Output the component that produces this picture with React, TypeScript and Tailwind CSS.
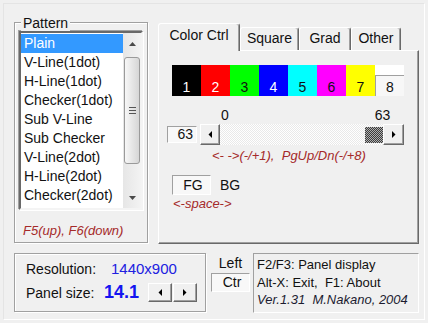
import React from "react";

const items = [
  "Plain",
  "V-Line(1dot)",
  "H-Line(1dot)",
  "Checker(1dot)",
  "Sub V-Line",
  "Sub Checker",
  "V-Line(2dot)",
  "H-Line(2dot)",
  "Checker(2dot)",
  "Checker(1x2)",
];

const swatches = [
  { bg: "bg-[#000000]", fg: "text-white", n: "1" },
  { bg: "bg-[#ff0000]", fg: "text-white", n: "2" },
  { bg: "bg-[#00ff00]", fg: "text-[#101010]", n: "3" },
  { bg: "bg-[#0000ff]", fg: "text-white", n: "4" },
  { bg: "bg-[#00ffff]", fg: "text-[#101010]", n: "5" },
  { bg: "bg-[#ff00ff]", fg: "text-[#101010]", n: "6" },
  { bg: "bg-[#ffff00]", fg: "text-[#101010]", n: "7" },
];

const raised =
  "flex items-center justify-center border border-t-white border-l-white border-r-[#696969] border-b-[#696969] shadow-[inset_-1px_-1px_0_#a0a0a0] bg-[#f0f0f0]";
const sunken = "border border-t-[#a0a0a0] border-l-[#a0a0a0] border-r-white border-b-white bg-[#f8f8f8]";
const etched = "border border-[#a0a0a0] shadow-[inset_1px_1px_0_#ffffff,1px_1px_0_#ffffff]";

function TriLeft() {
  return (
    <svg width="4" height="7" viewBox="0 0 4 7">
      <polygon points="4,0 4,7 0.5,3.5" fill="#000" />
    </svg>
  );
}
function TriRight() {
  return (
    <svg width="4" height="7" viewBox="0 0 4 7">
      <polygon points="0,0 0,7 3.5,3.5" fill="#000" />
    </svg>
  );
}

export default function App() {
  return (
    <div className="h-[323px] w-[428px] overflow-hidden bg-[#f0f0f0] p-[3px] text-[14px] text-[#111] [font-family:'Liberation_Sans',Arial,sans-serif]">
      <div className="h-[317px] w-[422px] border border-t-[#e4e4e4] border-l-[#e4e4e4] border-r-white border-b-white pl-[10px] pt-[10px]">
        {/* top row */}
        <div className="flex items-start">
          {/* Pattern group */}
          <div className={`relative mt-[8px] h-[221px] w-[134px] ${etched}`}>
            <div className="absolute left-[6px] top-[-8px] bg-[#f0f0f0] px-[2px] leading-[16px]">Pattern</div>
            <div className="ml-[4px] mt-[8px] flex h-[179px] w-[124px] border-2 border-t-[#696969] border-l-[#696969] border-r-[#f4f4f4] border-b-[#f4f4f4] bg-white shadow-[-1px_-1px_0_#a0a0a0,1px_1px_0_#ffffff]">
              <div className="h-full w-[102px] overflow-hidden pt-[1px]">
                {items.map((it, i) => (
                  <div
                    key={it}
                    className={
                      i === 0
                        ? "h-[19px] whitespace-nowrap bg-[#3399ff] pl-[3px] leading-[19px] text-white"
                        : "h-[19px] whitespace-nowrap pl-[3px] leading-[19px] text-[#111]"
                    }
                  >
                    {it}
                  </div>
                ))}
              </div>
              <div className="flex h-full w-[18px] flex-col bg-linear-to-r from-[#e6e6e6] to-[#f3f3f3]">
                <div className="flex h-[22px] items-center justify-center">
                  <svg width="7" height="4" viewBox="0 0 7 4">
                    <polygon points="0,4 7,4 3.5,0" fill="#4a4a4a" />
                  </svg>
                </div>
                <div className="mx-[1px] mt-[2px] flex h-[107px] items-center justify-center rounded-[3px] border border-[#9a9a9a] bg-linear-to-r from-[#f7f7f7] to-[#d6d6d6]">
                  <svg width="7" height="7" viewBox="0 0 7 7">
                    <rect x="0" y="0" width="7" height="1" fill="#555" />
                    <rect x="0" y="3" width="7" height="1" fill="#555" />
                    <rect x="0" y="6" width="7" height="1" fill="#555" />
                  </svg>
                </div>
                <div className="flex-1" />
                <div className="flex h-[20px] items-center justify-center">
                  <svg width="7" height="4" viewBox="0 0 7 4">
                    <polygon points="0,0 7,0 3.5,4" fill="#4a4a4a" />
                  </svg>
                </div>
              </div>
            </div>
            <div className="ml-[8px] mt-[13px] whitespace-nowrap text-[13px] italic leading-[15px] text-[#a52a2a]">
              F5(up), F6(down)
            </div>
          </div>

          {/* Tab control */}
          <div className="ml-[10px] mt-[9px] w-[261px]">
            <div className="flex h-[27px] items-end">
              <div className="relative z-10 -mb-px h-[28px] w-[82px] rounded-t-[3px] border border-b-0 border-t-white border-l-white border-r-[#696969] bg-[#f0f0f0] pt-[3px] text-center leading-[16px] shadow-[inset_-1px_0_0_#a0a0a0]">
                Color Ctrl
              </div>
              <div className="h-[23px] w-[59px] rounded-t-[3px] border border-b-0 border-t-white border-l-white border-r-[#696969] pt-[2px] text-center leading-[16px] shadow-[inset_-1px_0_0_#a0a0a0]">
                Square
              </div>
              <div className="h-[23px] w-[52px] rounded-t-[3px] border border-b-0 border-t-white border-l-white border-r-[#696969] pt-[2px] text-center leading-[16px] shadow-[inset_-1px_0_0_#a0a0a0]">
                Grad
              </div>
              <div className="h-[23px] w-[50px] rounded-t-[3px] border border-b-0 border-t-white border-l-white border-r-[#696969] pt-[2px] text-center leading-[16px] shadow-[inset_-1px_0_0_#a0a0a0]">
                Other
              </div>
            </div>
            <div className="h-[194px] w-[261px] border border-t-white border-l-white border-r-[#696969] border-b-[#696969] bg-[#f0f0f0] shadow-[inset_-1px_-1px_0_#a0a0a0]">
              {/* swatches */}
              <div className="ml-[13px] mt-[14px] flex h-[31px]">
                {swatches.map((s) => (
                  <div key={s.n} className={`flex h-[31px] w-[29px] items-end justify-center pb-[1px] leading-[16px] ${s.bg} ${s.fg}`}>
                    {s.n}
                  </div>
                ))}
                <div className="flex h-[31px] w-[29px] flex-col bg-white">
                  <div className="h-[10px]" />
                  <div className="flex flex-1 items-center justify-center border-l border-t border-[#a0a0a0] bg-[#f7f7f7] pt-[1px] leading-[16px] text-[#111]">
                    8
                  </div>
                </div>
              </div>
              {/* scale labels */}
              <div className="mt-[11px] flex h-[16px] leading-[16px]">
                <span className="ml-[62px]">0</span>
                <span className="ml-[146px]">63</span>
              </div>
              {/* slider */}
              <div className="mt-[1px] flex h-[21px] items-center">
                <div className={`ml-[8px] h-[17px] w-[30px] pr-[3px] text-right leading-[15px] ${sunken}`}>63</div>
                <div className="ml-[3px] flex h-[21px] w-[204px]">
                  <div className={`h-[21px] w-[20px] ${raised}`}>
                    <TriLeft />
                  </div>
                  <div className="flex flex-1 items-center justify-end bg-[repeating-conic-gradient(#ffffff_0%_25%,#e9e9e9_0%_50%)] bg-[length:2px_2px]">
                    <div className="h-[16px] w-[18px] bg-[repeating-conic-gradient(#3c3c3c_0%_25%,#b0b0b0_0%_50%)] bg-[length:2px_2px]" />
                  </div>
                  <div className={`h-[21px] w-[21px] ${raised}`}>
                    <TriRight />
                  </div>
                </div>
              </div>
              <div className="ml-[53px] mt-[3px] whitespace-pre text-[13px] italic leading-[15px] text-[#a52a2a]">
                {"<- ->(-/+1),  PgUp/Dn(-/+8)"}
              </div>
              {/* FG / BG */}
              <div className="mt-[12px] flex h-[20px] items-center">
                <div className={`ml-[13px] h-[20px] w-[39px] pl-[3px] text-center leading-[18px] ${sunken}`}>FG</div>
                <div className="ml-[9px] leading-[16px]">BG</div>
              </div>
              <div className="ml-[14px] mt-[1px] whitespace-pre text-[13px] italic leading-[15px] text-[#a52a2a]">
                {"<-space->"}
              </div>
            </div>
          </div>
        </div>

        {/* bottom row */}
        <div className="mt-[9px] flex items-start">
          <div className={`h-[59px] w-[192px] pl-[11px] pt-[7px] ${etched}`}>
            <div className="flex h-[16px] items-center leading-[16px]">
              <span className="w-[85px]">Resolution:</span>
              <span className="text-[15px] text-[#2020e0]">1440x900</span>
            </div>
            <div className="mt-[6px] flex h-[19px] items-center">
              <span className="w-[78px] leading-[16px]">Panel size:</span>
              <span className="w-[44px] text-[18px] font-bold leading-[19px] text-[#1414f0]">14.1</span>
              <div className={`h-[19px] w-[24px] ${raised}`}>
                <TriLeft />
              </div>
              <div className={`ml-[1px] h-[19px] w-[24px] ${raised}`}>
                <TriRight />
              </div>
            </div>
          </div>

          <div className="ml-[5px] w-[39px]">
            <div className="mt-[2px] text-center leading-[16px]">Left</div>
            <div className={`mt-[2px] h-[19px] w-[39px] pl-[3px] text-center leading-[17px] ${sunken}`}>Ctr</div>
          </div>

          <div className="ml-[3px] h-[60px] w-[166px] border border-t-[#a0a0a0] border-l-[#a0a0a0] border-r-white border-b-white pl-[3px] pt-[2px] text-[13px] leading-[17.5px]">
            <div className="whitespace-pre">F2/F3: Panel display</div>
            <div className="whitespace-pre">{"Alt-X: Exit,  F1: About"}</div>
            <div className="whitespace-pre italic text-[#1c1c30]">{"Ver.1.31  M.Nakano, 2004"}</div>
          </div>
        </div>
      </div>
    </div>
  );
}
